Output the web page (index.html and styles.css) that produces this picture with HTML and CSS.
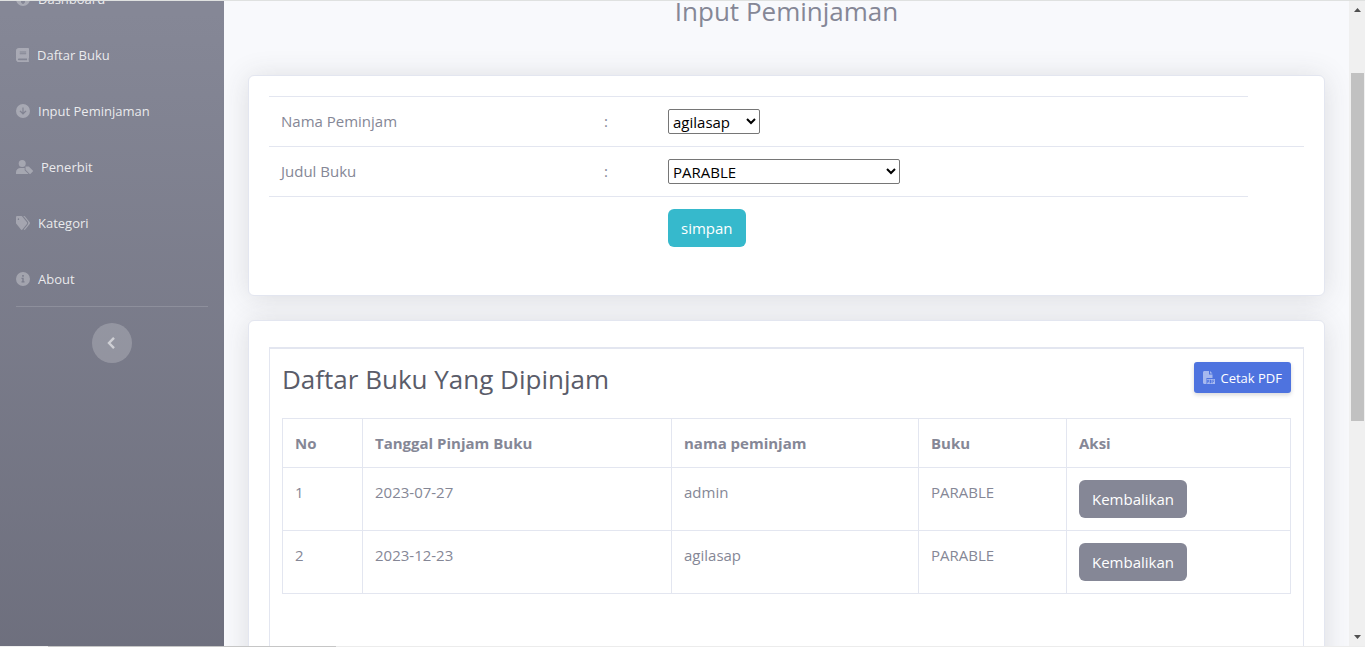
FILE: index.html
```html
<!DOCTYPE html>
<html lang="id">
<head>
<meta charset="utf-8">
<title>Input Peminjaman</title>
<link rel="stylesheet" href="styles.css">
</head>
<body>
<div class="window">
  <div class="viewport">
    <div class="page">
      <nav class="sidebar" aria-label="Menu">
        <a class="nav-link" href="#"><svg class="icon" width="14" height="14" viewBox="0 0 14 14"><path fill-rule="evenodd" d="M7 0a7 7 0 1 1 0 14A7 7 0 0 1 7 0ZM6.4 2v6.2a1.8 1.8 0 1 0 1.2 0V2Z"/></svg>Dashboard</a>
        <a class="nav-link" href="#"><svg class="icon" width="13" height="14" viewBox="0 0 448 512" preserveAspectRatio="none"><path d="M448 360V24c0-13.300-10.700-24-24-24H96C43 0 0 43 0 96v320c0 53 43 96 96 96h328c13.300 0 24-10.700 24-24v-16c0-7.500-3.500-14.300-8.900-18.700-4.200-15.400-4.200-59.300 0-74.700 5.400-4.300 8.900-11.100 8.900-18.600zM128 134c0-3.300 2.700-6 6-6h212c3.300 0 6 2.700 6 6v20c0 3.300-2.700 6-6 6H134c-3.300 0-6-2.700-6-6v-20zm0 64c0-3.300 2.700-6 6-6h212c3.300 0 6 2.700 6 6v20c0 3.300-2.700 6-6 6H134c-3.300 0-6-2.700-6-6v-20zm253.400 250H96c-17.700 0-32-14.300-32-32 0-17.600 14.400-32 32-32h285.400c-1.900 17.100-1.900 46.900 0 64z"/></svg>Daftar Buku</a>
        <a class="nav-link" href="#"><svg class="icon" width="14" height="14" viewBox="0 0 14 14"><path fill-rule="evenodd" d="M7 0a7 7 0 1 1 0 14A7 7 0 0 1 7 0ZM6.400 3.500V8.300L4.400 6.400 3.500 7.300 7 10.800 10.500 7.300 9.600 6.400 7.600 8.300V3.500Z"/></svg>Input Peminjaman</a>
        <a class="nav-link" href="#"><svg class="icon" width="17" height="14" viewBox="0 0 17 14"><circle cx="6.200" cy="3.500" r="3.500"/><path d="M0 14v-1.600C0 9.700 2 8 4.400 8h4.300v2.200l3.800 3.800ZM9.500 6.500h3.300l4 4a.8.800 0 0 1 0 1.100l-2.200 2.200a.8.800 0 0 1-1.100 0l-4-4Z"/></svg>Penerbit</a>
        <a class="nav-link" href="#"><svg class="icon" width="14" height="14" viewBox="0 0 640 512" preserveAspectRatio="none"><path d="M497.900 225.900L286.100 14.100A48 48 0 0 0 252.100 0H48C21.500 0 0 21.500 0 48v204.100a48 48 0 0 0 14.100 33.900l211.800 211.800c18.700 18.700 49.100 18.700 67.900 0l204.100-204.100c18.700-18.700 18.700-49.100 0-67.800zM112 150a32 32 0 1 1 0-64 32 32 0 0 1 0 64zM625.900 293.800L421.800 497.900c-18.700 18.700-49.100 18.700-67.900 0l-.4-.4L527.600 323.500a90 90 0 0 0 0-127.300L331.400 0h48.700a48 48 0 0 1 33.900 14.100l211.900 211.800c18.700 18.700 18.700 49.100 0 67.900z"/></svg>Kategori</a>
        <a class="nav-link" href="#"><svg class="icon" width="14" height="14" viewBox="0 0 14 14"><path fill-rule="evenodd" d="M7 0a7 7 0 1 1 0 14A7 7 0 0 1 7 0ZM6.200 3v1.700h1.600V3ZM5.500 5.800v1.100h.8v2.400h-.8v1.100h3V9.300h-.8V5.800Z"/></svg>About</a>
        <hr class="divider">
        <button class="toggle" type="button" aria-label="Tutup menu"><svg width="8" height="12" viewBox="0 0 8 12"><path d="M7 .8 2 6l5 5.200"/></svg></button>
      </nav>
      <main class="content">
        <h1 class="title">Input Peminjaman</h1>
        <form class="card form-card">
          <table class="form-table">
            <colgroup><col class="col-label"><col class="col-colon"><col><col class="col-end"></colgroup>
            <tr><td><label for="peminjam">Nama Peminjam</label></td><td>:</td><td><select id="peminjam" class="select-name"><option>agilasap</option></select></td></tr>
            <tr><td><label for="judul">Judul Buku</label></td><td>:</td><td><select id="judul" class="select-book"><option>PARABLE</option></select></td><td></td></tr>
            <tr><td></td><td></td><td><button class="btn btn-info" type="button">simpan</button></td></tr>
          </table>
        </form>
        <section class="card list-card">
          <div class="frame">
            <header class="list-head">
              <h2>Daftar Buku Yang Dipinjam</h2>
              <a class="btn-pdf" href="#"><svg width="12" height="13" viewBox="0 0 12 13"><path d="M0 1.500C0 .6.600 0 1.500 0H6v3.500h3.500V7H4.500C3.600 7 3 7.600 3 8.500V13H1.500C.6 13 0 12.400 0 11.500ZM7 0l2.500 2.500H7Z"/><path fill-rule="evenodd" d="M3.500 8H12v5H3.500ZM4.200 8.800v3.400h.6v-1h1V8.800Zm2.500 0v3.400h1.200l.6-.6V9.400l-.6-.6Zm2.700 0v3.400h.6v-1.300h1v-.6h-1v-.9h1.300v-.6Z"/></svg>Cetak PDF</a>
            </header>
            <table class="data">
              <colgroup><col class="col-no"><col class="col-date"><col class="col-name"><col class="col-book"><col></colgroup>
              <thead><tr><th>No</th><th>Tanggal Pinjam Buku</th><th>nama peminjam</th><th>Buku</th><th>Aksi</th></tr></thead>
              <tbody>
                <tr><td>1</td><td>2023-07-27</td><td>admin</td><td>PARABLE</td><td><button class="btn btn-gray" type="button">Kembalikan</button></td></tr>
                <tr><td>2</td><td>2023-12-23</td><td>agilasap</td><td>PARABLE</td><td><button class="btn btn-gray" type="button">Kembalikan</button></td></tr>
              </tbody>
            </table>
          </div>
        </section>
      </main>
    </div>
  </div>
  <div class="scrollbar" aria-hidden="true">
    <svg width="7" height="4" viewBox="0 0 7 4"><path d="M0 4 3.500 0 7 4Z"/></svg>
    <div class="track"><div class="thumb"></div></div>
    <svg width="7" height="4" viewBox="0 0 7 4"><path d="M0 0 3.500 4 7 0Z"/></svg>
  </div>
</div>
<div class="edge"></div>
</body>
</html>
```
FILE: styles.css
```css
* { box-sizing: border-box; }

body {
  display: flex;
  flex-direction: column;
  height: 100vh;
  margin: 0;
  overflow: hidden;
  font-family: "Open Sans", "Noto Sans", sans-serif;
  font-size: 15px;
  line-height: 24px;
  color: #858796;
  background: #f8f9fc;
}

.window {
  display: flex;
  flex: 1;
  min-height: 0;
  overflow: hidden;
  border-top: 1px solid #dfe1e0;
}

/* Thin strip under the window */
.edge {
  flex: none;
  height: 1px;
  background: linear-gradient(90deg, #f0f0f0 48px, #c6c6c6 48px, #c6c6c6 336px, #ececec 336px);
}

.viewport { flex: 1; min-width: 0; overflow: hidden; }

/* Page as seen after scrolling down a little */
.page { display: flex; margin-top: -30px; min-height: 1062px; }

.sidebar {
  flex: none;
  width: 224px;
  background: linear-gradient(180deg, #858796 4%, #60616f 100%);
}

.nav-link {
  display: flex;
  align-items: center;
  gap: 8px;
  height: 56px;
  padding: 0 16px;
  color: rgba(255, 255, 255, .85);
  font-size: 13px;
  text-decoration: none;
}

.icon { flex: none; fill: rgba(255, 255, 255, .3); }

.divider {
  margin: -1px 16px 16px;
  border: 0;
  border-top: 1px solid rgba(255, 255, 255, .15);
}

.toggle {
  display: flex;
  align-items: center;
  justify-content: center;
  width: 40px;
  height: 40px;
  margin: 0 auto;
  padding: 0 2px 0 0;
  border: 0;
  border-radius: 50%;
  background: rgba(255, 255, 255, .2);
}

.toggle path { fill: none; stroke: rgba(255, 255, 255, .55); stroke-width: 2.4; }

.content { flex: 1; min-width: 0; padding: 23px 24px 0; }

h1, h2 { margin: 0; font-size: 26px; font-weight: 400; line-height: 34px; }

.title { margin-bottom: 47px; text-align: center; }

.card {
  margin-bottom: 24px;
  padding: 20px;
  border: 1px solid #e3e6f0;
  border-radius: 6px;
  background: #fff;
  box-shadow: 0 2px 28px rgba(58, 59, 69, .15);
}

.form-card { padding-bottom: 36px; }
.list-card { padding-top: 26px; }

table { width: 100%; table-layout: fixed; border-collapse: collapse; }

td, th { padding: 12px; text-align: left; vertical-align: top; }

.form-table td { border-top: 1px solid #e3e6f0; }
.col-label { width: 323px; }
.col-colon { width: 64px; }
.col-end { width: 56px; }

select {
  display: block;
  height: 25px;
  border: 1px solid #767676;
  border-radius: 2px;
  background-color: #fff;
  color: #000;
  font-family: inherit;
  font-size: 15px;
}

.select-name { width: 92px; }
.select-book { width: 232px; }

.btn {
  display: block;
  height: 38px;
  padding: 0 13px;
  border: 0;
  border-radius: 6px;
  color: #fff;
  font-family: inherit;
  font-size: 15px;
}

.btn-info { background: #36b9cc; }
.btn-gray { background: #858796; }

.frame {
  min-height: 400px;
  padding: 13px 12px;
  border: 1px solid #e3e6f0;
  border-top-width: 2px;
}

.list-head {
  display: flex;
  align-items: flex-start;
  justify-content: space-between;
  margin-bottom: 22px;
  color: #5a5c69;
}

.btn-pdf {
  display: flex;
  align-items: center;
  gap: 5px;
  height: 31px;
  padding: 0 9px;
  border-radius: 3px;
  background: #4e73df;
  box-shadow: 0 2px 4px rgba(58, 59, 69, .2);
  color: #fff;
  font-size: 13px;
  text-decoration: none;
}

.btn-pdf svg { fill: rgba(255, 255, 255, .5); }

.data td, .data th { border: 1px solid #e3e6f0; }
.col-no { width: 80px; }
.col-date { width: 309px; }
.col-name { width: 247px; }
.col-book { width: 148px; }

.scrollbar {
  display: flex;
  flex: none;
  flex-direction: column;
  align-items: center;
  width: 16px;
  padding: 7px 0;
  background: #f0f0f0;
}

.scrollbar svg { fill: #505050; }

.track { flex: 1; width: 13px; padding: 61px 0 0; }
.thumb { height: 62%; background: #c1c1c1; }
```
